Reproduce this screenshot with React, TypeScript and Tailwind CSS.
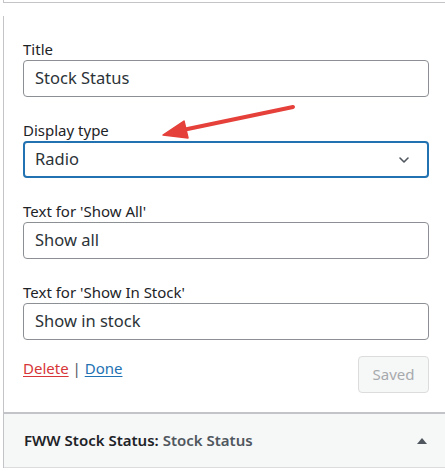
import { ChevronDown } from 'lucide-react'

const font = { fontFamily: '"Noto Sans", "Open Sans", sans-serif' }

function Field({ label, value, select }: { label: string; value: string; select?: boolean }) {
  return (
    <div className="flex flex-col">
      <label className="text-[15px] leading-[22px] text-[#1d2327]">{label}</label>
      {select ? (
        <div className="relative h-[37px] rounded-[4px] border-2 border-[#2271b1] flex items-center pl-[10px] pr-[15px] text-[16.5px] text-[#2c3338]">
          <span className="flex-1">{value}</span>
          <ChevronDown className="w-[16px] h-[16px] text-[#50575e]" strokeWidth={2.4} />
        </div>
      ) : (
        <div className="h-[37px] rounded-[4px] border border-[#8c8f94] flex items-center px-[11px] text-[16.5px] text-[#2c3338]">
          {value}
        </div>
      )}
    </div>
  )
}

export default function App() {
  return (
    <div className="relative w-[445px] h-[471px] overflow-hidden bg-white pl-[3px]" style={font}>
      {/* previous widget edge */}
      <div className="h-[3px] border-l border-b border-[#c3c4c7]" />

      {/* widget panel */}
      <div className="mt-[13px] border-l border-[#c3c4c7]">
        <div className="pl-[19px] pr-[16px] pt-[22px] pb-[19px] flex flex-col gap-[22px]">
          <Field label="Title" value="Stock Status" />
          <Field label="Display type" value="Radio" select />
          <Field label="Text for 'Show All'" value="Show all" />
          <Field label="Text for 'Show In Stock'" value="Show in stock" />
          <div className="flex items-start justify-between -mt-[6px]">
            <div className="text-[15px] leading-[22px] mt-[1px]">
              <a className="text-[#d63638] underline underline-offset-2">Delete</a>
              <span className="text-[#50575e]"> | </span>
              <a className="text-[#2271b1] underline underline-offset-2">Done</a>
            </div>
            <button className="h-[37px] w-[71px] rounded-[4px] border border-[#dcdcde] bg-[#f6f7f7] text-[15px] text-[#a7aaad]">
              Saved
            </button>
          </div>
        </div>

        {/* widget header */}
        <div className="h-[56px] border-t-2 border-b border-t-[#c3c4c7] border-b-[#dcdcde] bg-[#f6f7f7] flex items-center pl-[20px] pr-[18px]">
          <h3 className="flex-1 text-[15px] font-semibold text-[#1d2327]">
            FWW Stock Status:{' '}
            <span className="text-[#50575e]">Stock Status</span>
          </h3>
          <svg width="10" height="6" viewBox="0 0 10 6">
            <path d="M0 6 L5 0 L10 6 Z" fill="#50575e" />
          </svg>
        </div>
      </div>

      {/* annotation arrow */}
      <svg className="absolute left-0 top-0 pointer-events-none" width="445" height="471">
        <line x1="293" y1="107" x2="178" y2="131" stroke="#e5403a" strokeWidth="4" strokeLinecap="round" />
        <path d="M163 135 L184 121 L188 138 Z" fill="#e5403a" stroke="#e5403a" strokeWidth="1.5" strokeLinejoin="round" />
      </svg>
    </div>
  )
}
